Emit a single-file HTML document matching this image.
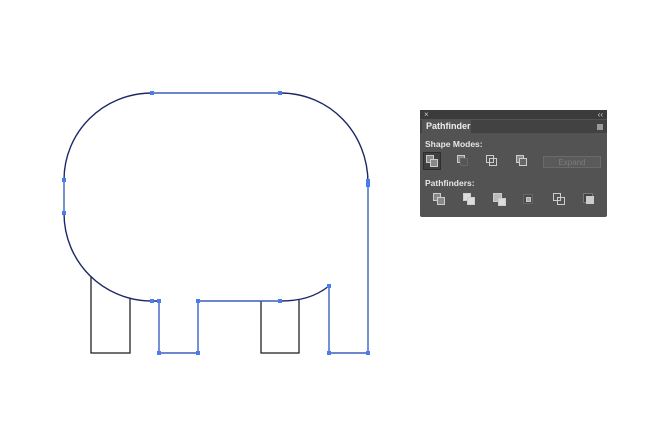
<!DOCTYPE html>
<html><head><style>
body{margin:0;width:660px;height:445px;background:#fff;position:relative;overflow:hidden;font-family:"Liberation Sans",sans-serif}
.p{position:absolute;left:420px;top:110px;width:187px;height:107px;background:#535353;border-radius:2px}
.tb{position:absolute;left:0;top:0;width:187px;height:9px;background:#3b3b3b;color:#ccc;font-size:8px;line-height:9px}
.tr{position:absolute;left:0;top:10px;width:187px;height:13px;background:#424242}
.tab{position:absolute;left:2px;top:10px;width:49px;height:13px;background:#535353;color:#eee;font-size:9px;font-weight:bold;line-height:13px;padding-left:4px;box-sizing:border-box}
.lb{position:absolute;color:#e6e6e6;font-size:8.5px;font-weight:bold}
.ex{position:absolute;left:123px;top:46px;width:58px;height:12px;border:1px solid #6a6a6a;background:#5a5a5a;color:#7c7c7c;font-size:8px;text-align:center;line-height:12px;box-sizing:border-box}
.i{position:absolute;width:12px;height:12px}
.sq{position:absolute;width:8px;height:8px;border:1px solid #ccc;background:#888;box-sizing:border-box}
</style></head><body>
<svg width="660" height="445" style="position:absolute;left:0;top:0">
<rect x="91" y="277" width="39" height="76" fill="none" stroke="#222" stroke-width="1.3"/>
<rect x="261" y="299" width="38" height="54" fill="none" stroke="#222" stroke-width="1.3"/>
<path d="M152,93 H280 C330,93 368,133 368,183 V353 H329 V286 C315,297 300,301 280,301 H198 V353 H159 V301 H152 C103,301 64,262 64,213 V180 C64,132 103,93 152,93 Z" fill="#fff" stroke="#1c2766" stroke-width="1.4"/>
<path d="M152,93 H280 M368,183 V353 H329 V286 M280,301 H198 V353 H159 V301 M64,213 V180" fill="none" stroke="#4a78e8" stroke-width="1"/>
<g fill="#4a7cf0">
<rect x="150" y="91" width="4" height="4"/><rect x="278" y="91" width="4" height="4"/>
<rect x="62" y="178" width="4" height="4"/><rect x="62" y="211" width="4" height="4"/>
<rect x="366" y="179" width="4" height="4"/><rect x="366" y="183" width="4" height="4"/>
<rect x="150" y="299" width="4" height="4"/><rect x="157" y="299" width="4" height="4"/>
<rect x="196" y="299" width="4" height="4"/><rect x="278" y="299" width="4" height="4"/>
<rect x="327" y="284" width="4" height="4"/>
<rect x="157" y="351" width="4" height="4"/><rect x="196" y="351" width="4" height="4"/>
<rect x="327" y="351" width="4" height="4"/><rect x="366" y="351" width="4" height="4"/>
</g>
</svg>
<div class="p">
<div class="tb"><span style="position:absolute;left:4px">×</span><span style="position:absolute;right:4px">‹‹</span></div>
<div class="tr"></div>
<div class="tab">Pathfinder</div>
<div style="position:absolute;right:4px;top:14px;width:6px;height:6px;background:#999"></div>
<div class="lb" style="left:5px;top:29px">Shape Modes:</div>
<div style="position:absolute;left:3px;top:42px;width:18px;height:18px;background:#3f3f3f;border:1px solid #2e2e2e;box-sizing:border-box"></div>
<div class="i" style="left:6px;top:45px"><div class="sq" style="left:0;top:0"></div><div class="sq" style="left:4px;top:4px"></div></div>
<div class="i" style="left:37px;top:45px"><div class="sq" style="left:0;top:0"></div><div class="sq" style="left:3px;top:3px;background:#555;border-color:#666"></div></div>
<div class="i" style="left:66px;top:45px"><div class="sq" style="left:0;top:0;background:none"></div><div class="sq" style="left:3px;top:3px;background:none"></div></div>
<div class="i" style="left:96px;top:45px"><div class="sq" style="left:0;top:0"></div><div class="sq" style="left:3px;top:3px;background:#666"></div></div>
<div class="ex">Expand</div>
<div class="lb" style="left:5px;top:68px">Pathfinders:</div>
<div class="i" style="left:13px;top:83px"><div class="sq" style="left:0;top:0"></div><div class="sq" style="left:4px;top:4px"></div></div>
<div class="i" style="left:43px;top:83px"><div class="sq" style="left:0;top:0;background:#ddd"></div><div class="sq" style="left:4px;top:4px;background:#ddd"></div></div>
<div class="i" style="left:73px;top:83px"><div class="sq" style="left:0;top:0;width:9px;height:9px;background:#bbb"></div><div class="sq" style="left:5px;top:5px;background:#ddd"></div></div>
<div class="i" style="left:103px;top:84px"><div class="sq" style="left:0;top:0;width:10px;height:10px;background:#4a4a4a;border-color:#666"></div><div class="sq" style="left:3px;top:3px;width:5px;height:5px;background:#aaa"></div></div>
<div class="i" style="left:133px;top:83px"><div class="sq" style="left:0;top:0;background:none"></div><div class="sq" style="left:4px;top:4px;background:none"></div></div>
<div class="i" style="left:163px;top:83px"><div class="sq" style="left:0;top:0;width:10px;height:10px;background:#444;border-color:#777"></div><div class="sq" style="left:3px;top:3px;background:#ccc"></div></div>
</div>
</body></html>
